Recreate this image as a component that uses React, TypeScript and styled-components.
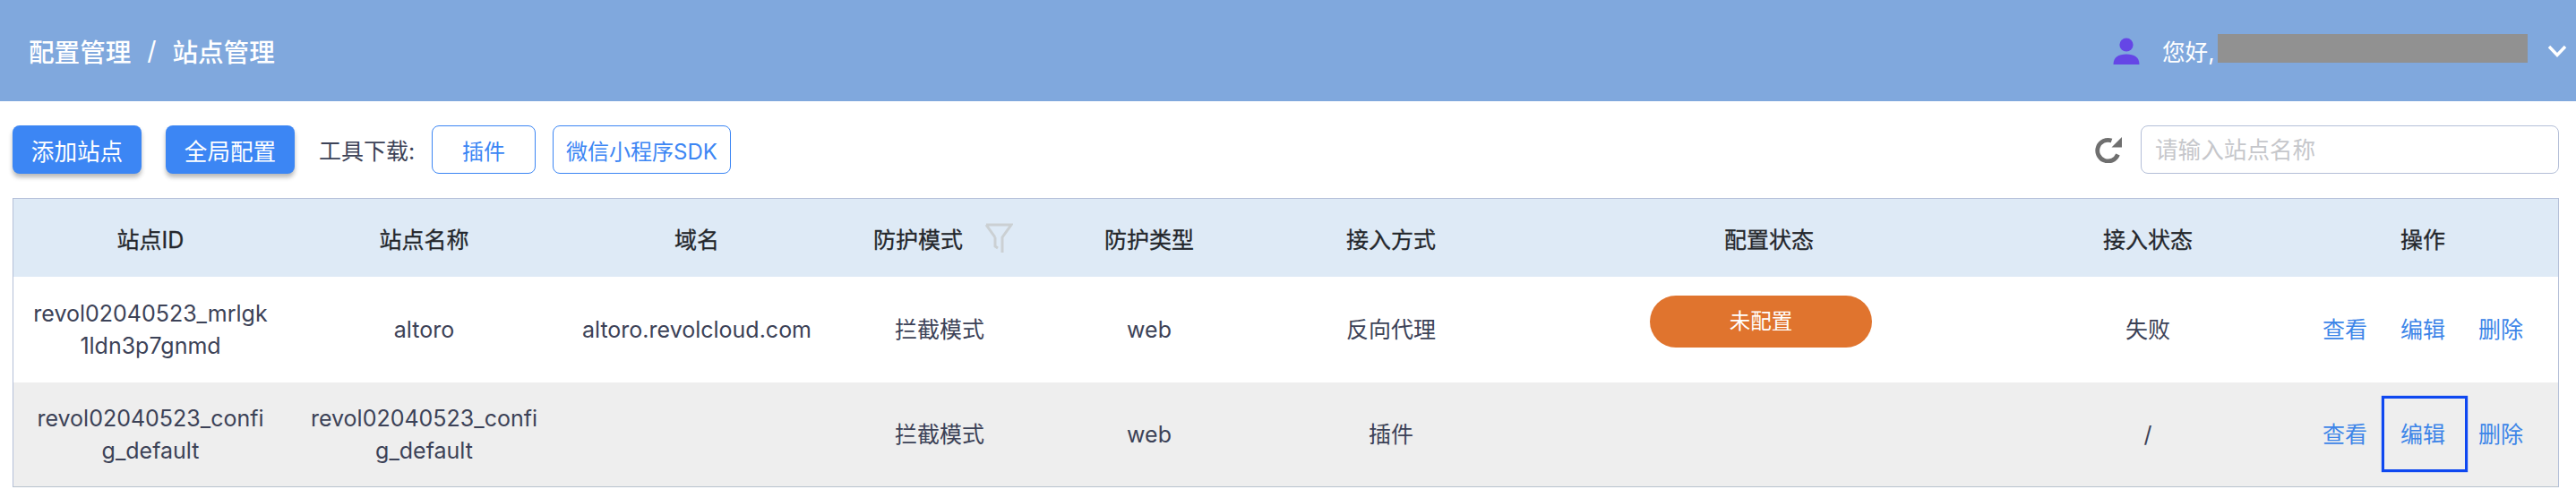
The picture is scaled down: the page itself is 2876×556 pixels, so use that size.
import React from "react";
import styled, { createGlobalStyle } from "styled-components";

const Global = createGlobalStyle`
  html, body { margin: 0; padding: 0; background: #fff; }
  body { font-family: "Inter", "Noto Sans CJK SC", sans-serif; font-size: 25px; color: #3c4257; }
  * { box-sizing: border-box; }
`;

const Page = styled.div`
  width: 2876px;
  height: 556px;
  overflow: hidden;
  background: #fff;
`;

const Header = styled.header`
  height: 113px;
  background: #80a8dd;
  display: flex;
  align-items: center;
  justify-content: space-between;
  padding: 0 10px 0 32px;
  color: #fff;
`;

const Crumbs = styled.nav`
  display: flex;
  align-items: center;
  font-size: 28.6px;
  font-weight: 500;
`;

const CrumbSep = styled.span`
  width: 46px;
  text-align: center;
  font-weight: 400;
`;

const UserBox = styled.div`
  display: flex;
  align-items: center;
`;

const Greeting = styled.span`
  margin-left: 25px;
  width: 62px;
  white-space: nowrap;
  font-size: 25.6px;
`;

const Redacted = styled.div`
  width: 346px;
  height: 32px;
  background: #919191;
  margin-top: -6px;
`;

const Chevron = styled.svg`
  margin-left: 22px;
`;

const Toolbar = styled.div`
  display: flex;
  align-items: center;
  height: 54px;
  margin: 27px 19px 27px 14px;
`;

const PrimaryButton = styled.button`
  width: 144px;
  height: 54px;
  margin-right: 27px;
  border: 0;
  border-radius: 8px;
  background: #3c86f4;
  color: #fff;
  font: inherit;
  font-size: 25.6px;
  padding: 0;
  box-shadow: 0 4px 5px rgba(0, 0, 0, 0.28);
`;

const ToolLabel = styled.span`
  width: 126px;
  color: #3c4257;
  white-space: nowrap;
`;

const OutlineButton = styled.button<{ $w: number }>`
  width: ${(p) => p.$w}px;
  height: 54px;
  margin-right: 19px;
  border: 1px solid #3c86f4;
  border-radius: 8px;
  background: #fff;
  color: #3c86f4;
  font: inherit;
  font-size: 24px;
  padding: 0;
  white-space: nowrap;
`;

const Spacer = styled.div`
  flex: 1;
`;

const SearchInput = styled.input`
  width: 467px;
  height: 54px;
  margin-left: 21px;
  border: 1px solid #b4bfd8;
  border-radius: 8px;
  padding: 0 15px;
  font: inherit;
  font-size: 25.6px;
  color: #3c4257;
  outline: none;
  &::placeholder { color: #c6c7cb; opacity: 1; }
`;

const TableWrap = styled.div`
  margin: 0 19px 0 14px;
  border: 1px solid #b4bfd8;
  border-bottom-color: #b8c2cc;
`;

const Table = styled.table`
  width: 100%;
  table-layout: fixed;
  border-collapse: collapse;
`;

const HeadRow = styled.tr`
  height: 87px;
  background: #deeaf6;
`;

const Th = styled.th`
  font-weight: 400;
  color: #24272c;
  text-align: center;
  padding: 0;
  -webkit-text-stroke: 0.3px #24272c;
`;

const HeadInner = styled.span`
  display: inline-flex;
  align-items: center;
  position: relative;
  left: 4px;
`;

const Filter = styled.svg`
  margin-left: 24px;
`;

const Row = styled.tr<{ $alt?: boolean; $h: number }>`
  height: ${(p) => p.$h}px;
  background: ${(p) => (p.$alt ? "#eeeeee" : "#fff")};
`;

const Td = styled.td`
  text-align: center;
  padding: 0;
  line-height: 36.5px;
  white-space: pre-line;
  color: #3c4257;
`;

const Pill = styled.div`
  width: 248px;
  height: 58px;
  margin: 0 auto 18px;
  position: relative;
  left: -9px;
  border-radius: 29px;
  background: #e0742e;
  color: #fff;
  display: flex;
  align-items: center;
  justify-content: center;
  font-size: 23.5px;
`;

const Actions = styled.div`
  display: flex;
  justify-content: center;
`;

const ActionLink = styled.a<{ $focus?: boolean }>`
  position: relative;
  width: 87px;
  color: #3d85e8;
  text-align: center;
  ${(p) =>
    p.$focus
      ? `&::after {
          content: "";
          position: absolute;
          left: -3px;
          right: -6px;
          top: -25px;
          bottom: -24px;
          border: 3px solid #0f48f0;
          box-shadow: 0 0 1px #0f48f0;
        }`
      : ""}
`;

const widths = [306, 305, 304, 238, 230, 310, 534, 312, 302];
const heads = ["站点ID", "站点名称", "域名", "防护模式", "防护类型", "接入方式", "配置状态", "接入状态", "操作"];

const UserIcon = () => (
  <svg width="30" height="30" viewBox="0 0 30 30">
    <circle cx="15" cy="8" r="7.6" fill="#6546e6" />
    <path d="M0.5 30 C0.5 22 6 18.5 15 18.5 C24 18.5 29.5 22 29.5 30 Z" fill="#6546e6" />
  </svg>
);

const RefreshIcon = () => (
  <svg width="32" height="30" viewBox="0 0 32 30">
    <path d="M27.5 20.5 A11.8 11.8 0 1 1 20.5 5" fill="none" stroke="#6f6f6f" strokeWidth="4.8" />
    <path d="M32 1 V12.5 H20.5 Z" fill="#6f6f6f" />
  </svg>
);

const FilterIcon = () => (
  <Filter width="32" height="34" viewBox="0 0 32 34">
    <path
      d="M2 2 H30 L20 16 V33 M12 16 V26 L15 28 M2 2 L12 16"
      fill="none"
      stroke="#cbd0d3"
      strokeWidth="3"
    />
  </Filter>
);

const Links = ({ focus }: { focus?: boolean }) => (
  <Actions>
    <ActionLink>查看</ActionLink>
    <ActionLink $focus={focus}>编辑</ActionLink>
    <ActionLink>删除</ActionLink>
  </Actions>
);

export default function App() {
  return (
    <Page>
      <Global />
      <Header>
        <Crumbs>
          <span>配置管理</span>
          <CrumbSep>/</CrumbSep>
          <span>站点管理</span>
        </Crumbs>
        <UserBox>
          <UserIcon />
          <Greeting>您好,</Greeting>
          <Redacted />
          <Chevron width="22" height="14" viewBox="0 0 22 14">
            <path d="M2 2 L11 11.5 L20 2" fill="none" stroke="#fff" strokeWidth="3.4" />
          </Chevron>
        </UserBox>
      </Header>
      <Toolbar>
        <PrimaryButton>添加站点</PrimaryButton>
        <PrimaryButton>全局配置</PrimaryButton>
        <ToolLabel>工具下载:</ToolLabel>
        <OutlineButton $w={116}>插件</OutlineButton>
        <OutlineButton $w={199}>微信小程序SDK</OutlineButton>
        <Spacer />
        <RefreshIcon />
        <SearchInput placeholder="请输入站点名称" />
      </Toolbar>
      <TableWrap>
        <Table>
          <colgroup>
            {widths.map((w, i) => (
              <col key={i} style={{ width: w }} />
            ))}
          </colgroup>
          <thead>
            <HeadRow>
              {heads.map((h) =>
                h === "防护模式" ? (
                  <Th key={h}>
                    <HeadInner>
                      {h}
                      <FilterIcon />
                    </HeadInner>
                  </Th>
                ) : (
                  <Th key={h}>{h}</Th>
                )
              )}
            </HeadRow>
          </thead>
          <tbody>
            <Row $h={118}>
              <Td>{"revol02040523_mrlgk\n1ldn3p7gnmd"}</Td>
              <Td>altoro</Td>
              <Td>altoro.revolcloud.com</Td>
              <Td>拦截模式</Td>
              <Td>web</Td>
              <Td>反向代理</Td>
              <Td>
                <Pill>未配置</Pill>
              </Td>
              <Td>失败</Td>
              <Td>
                <Links />
              </Td>
            </Row>
            <Row $alt $h={116}>
              <Td>{"revol02040523_confi\ng_default"}</Td>
              <Td>{"revol02040523_confi\ng_default"}</Td>
              <Td></Td>
              <Td>拦截模式</Td>
              <Td>web</Td>
              <Td>插件</Td>
              <Td></Td>
              <Td>/</Td>
              <Td>
                <Links focus />
              </Td>
            </Row>
          </tbody>
        </Table>
      </TableWrap>
    </Page>
  );
}
